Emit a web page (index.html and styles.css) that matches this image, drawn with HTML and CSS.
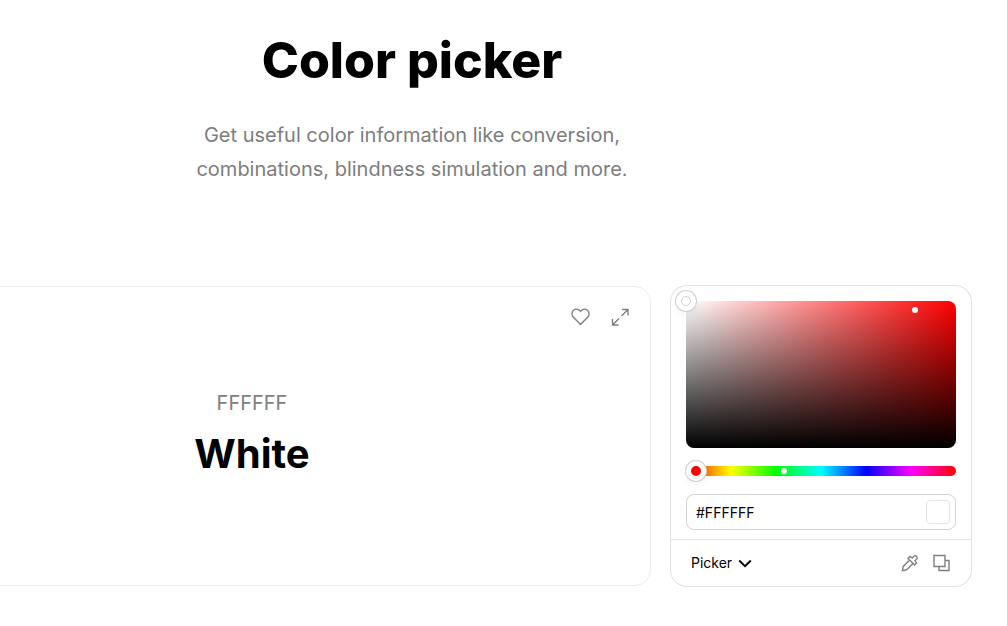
FILE: index.html
```html
<!DOCTYPE html>
<html lang="en">
<head>
<meta charset="utf-8">
<meta name="viewport" content="width=device-width, initial-scale=1">
<title>Color picker</title>
<link rel="stylesheet" href="styles.css">
</head>
<body>
<main class="page">
  <header class="intro">
    <h1 class="intro-title">Color picker</h1>
    <p class="intro-text">Get useful color information like conversion,<br>combinations, blindness simulation and more.</p>
  </header>
  <div class="workspace">
    <section class="color-card">
      <div class="card-actions">
        <button class="icon-button" type="button" aria-label="Save color">
          <svg width="20" height="20" viewBox="0 0 20 20"><path d="M10.500 17.500 3.400 10.300C1.400 8.200 1.500 5 3.500 3.300 5.600 1.500 8.500 1.800 10.500 4.400 12.500 1.800 15.400 1.500 17.500 3.300 19.500 5 19.600 8.200 17.600 10.300Z"/></svg>
        </button>
        <button class="icon-button" type="button" aria-label="Full screen">
          <svg width="20" height="20" viewBox="0 0 20 20"><path d="M12 2.500h6v6M18 2.500l-6.500 6.500M2.500 12v6h6M2.500 18l6.500-6.500"/></svg>
        </button>
      </div>
      <p class="card-hex">FFFFFF</p>
      <h2 class="card-name">White</h2>
    </section>
    <section class="picker">
      <div class="picker-body">
        <div class="shade">
          <span class="shade-handle"></span>
          <span class="dot shade-dot"></span>
        </div>
        <div class="hue">
          <input class="hue-range" type="range" min="0" max="360" value="0" aria-label="Hue">
          <span class="dot hue-dot"></span>
        </div>
        <div class="hex-field">
          <input class="hex-input" type="text" value="#FFFFFF" aria-label="Hex color">
          <span class="swatch"></span>
        </div>
      </div>
      <footer class="picker-footer">
        <button class="mode-button" type="button">Picker
          <svg width="14" height="14" viewBox="0 0 14 14"><path d="M1.200 4.500 7 10.200l5.800-5.700"/></svg>
        </button>
        <div class="picker-tools">
          <button class="icon-button" type="button" aria-label="Pick from screen">
            <svg width="20" height="20" viewBox="0 0 20 20"><path d="M9.600 7 3.200 13.400 2.400 17.600 6.600 16.800 13 10.400M8 5.400l2-2 2.200 1.600 1.700-1.700c1.900-1.600 4.400.9 2.800 2.800L15 7.800l1.600 2.200-2 2Z"/></svg>
          </button>
          <button class="icon-button" type="button" aria-label="Swap colors">
            <svg width="20" height="20" viewBox="0 0 20 20"><path d="M2 2.500h11v11h-11ZM13 7.500h4v10h-10v-4"/></svg>
          </button>
        </div>
      </footer>
    </section>
  </div>
</main>
</body>
</html>
```
FILE: styles.css
```css
*,
*::after {
  box-sizing: border-box;
}

body {
  margin: 0;
  overflow-x: hidden;
  background: #fff;
  color: #000;
  font-family: Inter, sans-serif;
}

h1, h2, p {
  margin: 0;
}

button {
  padding: 0;
  border: 0;
  background: none;
  color: inherit;
  font: inherit;
  cursor: pointer;
}

svg {
  display: block;
  fill: none;
  stroke: currentColor;
  stroke-width: 1.4;
}

.page {
  margin: 0 36px 0 -147px;
  padding: 30px 0 40px;
}

.intro {
  text-align: center;
}

.intro-title {
  font-size: 50px;
  font-weight: 800;
  line-height: 60px;
}

.intro-text {
  margin-top: 28px;
  color: #7d7d7d;
  font-size: 20px;
  line-height: 34px;
}

.workspace {
  display: flex;
  gap: 20px;
  margin-top: 100px;
}

.color-card {
  flex: 1;
  padding: 20px;
  border: 1px solid #eee;
  border-radius: 16px;
  text-align: center;
}

.card-actions {
  display: flex;
  justify-content: flex-end;
  gap: 20px;
}

.icon-button {
  color: #808080;
}

.card-hex {
  margin-top: 61px;
  color: #808080;
  font-size: 20px;
  line-height: 30px;
}

.card-name {
  margin-top: 12px;
  font-size: 40px;
  font-weight: 700;
  line-height: 48px;
}

.picker {
  width: 300px;
  border-radius: 16px;
  box-shadow: 0 0 0 1px #e2e2e2;
}

.picker-body {
  display: grid;
  gap: 18px;
  padding: 15px 15px 9px;
}

.shade {
  position: relative;
  height: 147px;
  border-radius: 8px;
  background: linear-gradient(to top, #000, transparent), linear-gradient(to right, #fff, #f00);
}

.shade-handle {
  position: absolute;
  top: -10px;
  left: -10px;
  width: 20px;
  height: 20px;
  border: 5px solid #fff;
  border-radius: 50%;
  background: #fff;
  box-shadow: 0 0 0 1px #d0d0d0, 0 5px 10px rgba(0, 0, 0, 0.05);
}

.shade-handle::after {
  content: "";
  display: block;
  height: 10px;
  border: 1px solid #d0d0d0;
  border-radius: 50%;
}

.dot {
  position: absolute;
  width: 6px;
  height: 6px;
  border-radius: 50%;
  background: #fff;
}

.shade-dot {
  top: 6px;
  right: 38px;
}

.hue {
  position: relative;
  display: flex;
}

.hue-range {
  appearance: none;
  width: 100%;
  height: 10px;
  margin: 0;
  border-radius: 5px;
  background: linear-gradient(to right, #f00, #ff0, #0f0, #0ff, #00f, #f0f, #f00);
}

.hue-range::-webkit-slider-thumb {
  appearance: none;
  width: 20px;
  height: 20px;
  border: 5px solid #fff;
  border-radius: 50%;
  background: #f00;
  box-shadow: 0 0 0 1px #d0d0d0, 0 5px 10px rgba(0, 0, 0, 0.05);
}

.hue-dot {
  top: 2px;
  left: 95px;
}

.hex-field {
  display: flex;
  align-items: center;
  height: 36px;
  padding: 0 5px 0 9px;
  border: 1px solid #d4d4d4;
  border-radius: 8px;
}

.hex-input {
  flex: 1;
  min-width: 0;
  padding: 2px 0 0;
  border: 0;
  outline: 0;
  background: none;
  color: #000;
  font: 14px/20px Inter, sans-serif;
}

.swatch {
  width: 24px;
  height: 24px;
  border: 1px solid #e6e6e6;
  border-radius: 4px;
}

.picker-footer {
  display: flex;
  align-items: center;
  justify-content: space-between;
  height: 47px;
  padding: 0 19px 0 20px;
  border-top: 1px solid #e6e6e6;
}

.mode-button {
  display: flex;
  align-items: center;
  gap: 6px;
  font-size: 14px;
  line-height: 20px;
}

.mode-button svg {
  stroke-width: 1.8;
}

.picker-tools {
  display: flex;
  gap: 12px;
}
```
